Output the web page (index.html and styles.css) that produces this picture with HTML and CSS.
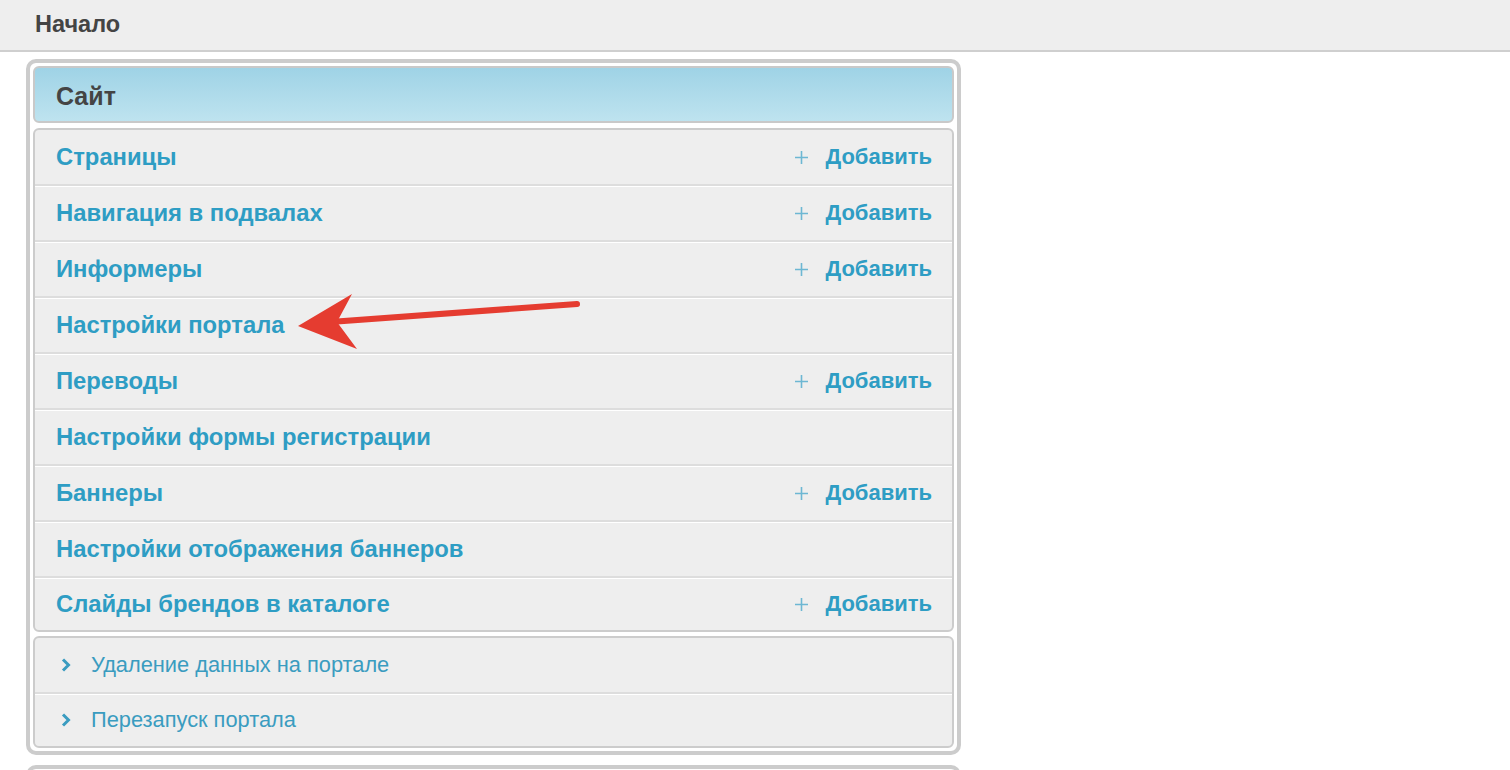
FILE: index.html
```html
<!DOCTYPE html>
<html lang="ru">
<head>
    <meta charset="UTF-8">
    <title>Начало</title>
    <link rel="stylesheet" href="styles.css">
</head>
<body>
    <div class="topbar">Начало</div>
    <div class="page">
        <div class="panel">
            <div class="panel-header">Сайт</div>
            <div class="group">
                <div class="row"><a class="title">Страницы</a><a class="add"><svg class="plus" width="13" height="13" viewBox="0 0 13 13"><path d="M6.5 0 V13 M0 6.5 H13" stroke="#6db7d3" stroke-width="1.6"/></svg>Добавить</a></div>
                <div class="row"><a class="title">Навигация в подвалах</a><a class="add"><svg class="plus" width="13" height="13" viewBox="0 0 13 13"><path d="M6.5 0 V13 M0 6.5 H13" stroke="#6db7d3" stroke-width="1.6"/></svg>Добавить</a></div>
                <div class="row"><a class="title">Информеры</a><a class="add"><svg class="plus" width="13" height="13" viewBox="0 0 13 13"><path d="M6.5 0 V13 M0 6.5 H13" stroke="#6db7d3" stroke-width="1.6"/></svg>Добавить</a></div>
                <div class="row"><a class="title">Настройки портала</a></div>
                <div class="row"><a class="title">Переводы</a><a class="add"><svg class="plus" width="13" height="13" viewBox="0 0 13 13"><path d="M6.5 0 V13 M0 6.5 H13" stroke="#6db7d3" stroke-width="1.6"/></svg>Добавить</a></div>
                <div class="row"><a class="title">Настройки формы регистрации</a></div>
                <div class="row"><a class="title">Баннеры</a><a class="add"><svg class="plus" width="13" height="13" viewBox="0 0 13 13"><path d="M6.5 0 V13 M0 6.5 H13" stroke="#6db7d3" stroke-width="1.6"/></svg>Добавить</a></div>
                <div class="row"><a class="title">Настройки отображения баннеров</a></div>
                <div class="row"><a class="title">Слайды брендов в каталоге</a><a class="add"><svg class="plus" width="13" height="13" viewBox="0 0 13 13"><path d="M6.5 0 V13 M0 6.5 H13" stroke="#6db7d3" stroke-width="1.6"/></svg>Добавить</a></div>
            </div>
            <div class="group">
                <div class="row small">
                    <svg class="chevron" width="10" height="14" viewBox="0 0 10 14"><path d="M2 1.5 L7.5 7 L2 12.5" fill="none" stroke="#3a9cc0" stroke-width="3"/></svg>
                    <a class="title">Удаление данных на портале</a>
                </div>
                <div class="row small">
                    <svg class="chevron" width="10" height="14" viewBox="0 0 10 14"><path d="M2 1.5 L7.5 7 L2 12.5" fill="none" stroke="#3a9cc0" stroke-width="3"/></svg>
                    <a class="title">Перезапуск портала</a>
                </div>
            </div>
        </div>
        <div class="panel next"></div>

        <!-- annotation arrow -->
        <svg class="arrow" width="320" height="80" viewBox="280 280 320 80">
            <line x1="577" y1="304" x2="330" y2="322" stroke="#e53c30" stroke-width="6" stroke-linecap="round"/>
            <polygon points="298,326 352,294 337,322 357,349" fill="#e53c30"/>
        </svg>
    </div>
</body>
</html>
```

FILE: styles.css
```css
body {
    margin: 0;
    font-family: 'Liberation Sans', Arial, sans-serif;
    background: #fff;
    color: #444;
}
.topbar {
    height: 50px;
    line-height: 48px;
    padding-left: 35px;
    background: #eeeeee;
    border-bottom: 2px solid #cfcfcf;
    font-size: 23.5px;
    font-weight: bold;
    color: #444;
}
.page {
    position: relative;
    padding: 7px 0 0 26px;
}
.panel {
    width: 921px;
    padding: 3px;
    border: 4px solid #cccccc;
    border-radius: 10px;
}
.panel.next {
    margin-top: 10px;
    height: 40px;
}
.panel-header {
    height: 53px;
    line-height: 56px;
    padding-left: 21px;
    border: 2px solid #c9c9c9;
    border-radius: 6px;
    background: linear-gradient(#9fd3e6, #bee3ef);
    font-size: 25px;
    font-weight: bold;
    color: #444;
}
.group {
    margin-top: 5px;
    border: 2px solid #cccccc;
    border-radius: 6px;
    background: #eeeeee;
    overflow: hidden;
}
.group + .group {
    margin-top: 4px;
}
.row {
    display: flex;
    align-items: center;
    height: 54px;
    padding: 0 20px 0 21px;
    border-bottom: 2px solid #dddddd;
    box-shadow: 0 1px 0 #fff;
}
.row:last-child {
    border-bottom: none;
    box-shadow: none;
    height: 52px;
}
.title {
    flex: 1;
    font-size: 23.8px;
    font-weight: bold;
    color: #2e9dc4;
}
.add {
    display: flex;
    align-items: center;
    font-size: 22px;
    font-weight: bold;
    color: #2e9dc4;
}
.plus {
    margin-right: 17px;
}
.row.small {
    padding-left: 26px;
}
.row.small .title {
    font-size: 21.8px;
    font-weight: normal;
    color: #3a9cc0;
}
.chevron {
    margin-right: 20px;
}
.arrow {
    position: absolute;
    left: 280px;
    top: 228px;
}
```
